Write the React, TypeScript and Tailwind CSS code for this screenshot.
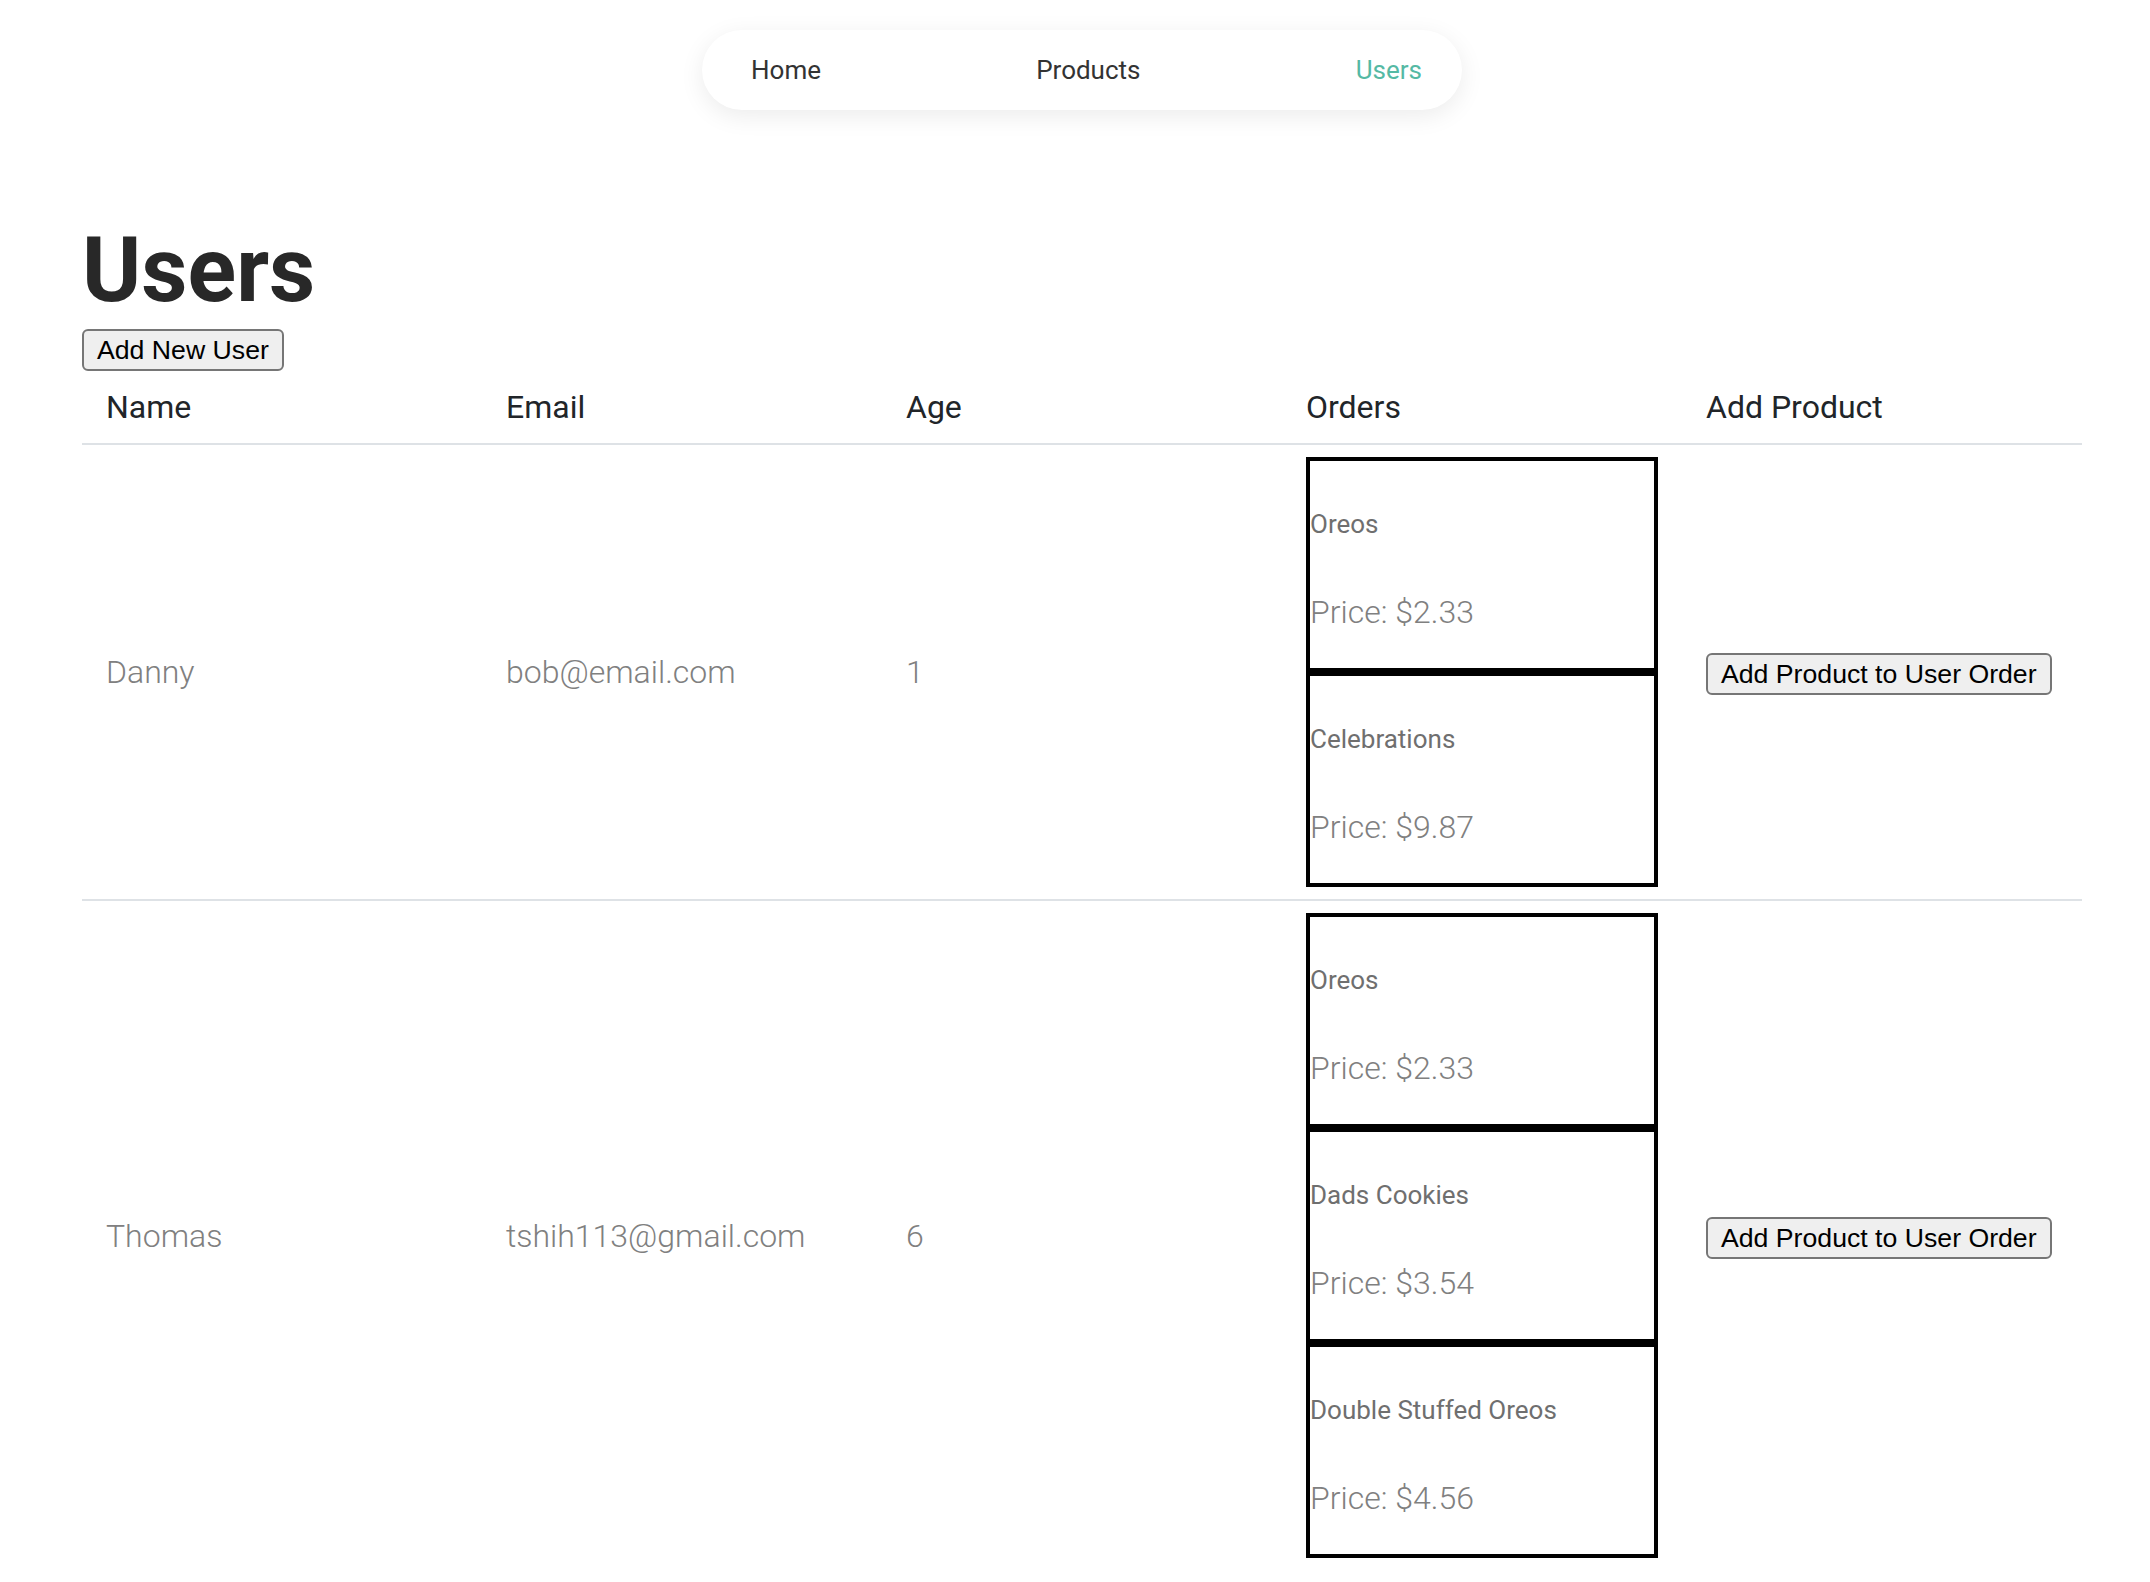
import React from 'react';

interface Product {
  name: string;
  price: number;
}

interface User {
  name: string;
  email: string;
  age: number;
  orders: Product[];
}

const users: User[] = [
  {
    name: 'Danny',
    email: 'bob@email.com',
    age: 1,
    orders: [
      { name: 'Oreos', price: 2.33 },
      { name: 'Celebrations', price: 9.87 },
    ],
  },
  {
    name: 'Thomas',
    email: 'tshih113@gmail.com',
    age: 6,
    orders: [
      { name: 'Oreos', price: 2.33 },
      { name: 'Dads Cookies', price: 3.54 },
      { name: 'Double Stuffed Oreos', price: 4.56 },
    ],
  },
];

const buttonClass =
  "h-[42px] px-[13px] bg-[#efefef] border-2 border-[#767676] rounded-[6px] text-black text-[26.67px] leading-none font-normal font-['Liberation_Sans',Arial,sans-serif] whitespace-nowrap";

const Nav: React.FC = () => (
  <div className="flex justify-center pt-[30px] pl-[14px]">
    <nav className="flex items-center justify-between w-[760px] h-[80px] rounded-full bg-white shadow-[0_6px_24px_rgba(0,0,0,0.08)] pl-[49px] pr-[40px] text-[26px]">
      <a className="text-[#333333]">Home</a>
      <a className="text-[#333333]">Products</a>
      <a className="text-[#55b9a4]">Users</a>
    </nav>
  </div>
);

const OrderCard: React.FC<{ product: Product }> = ({ product }) => (
  <div className="border-4 border-black pt-[44px] pb-[32px]">
    <p className="text-[26px] leading-[39px] font-normal text-[#6f6f6f]">{product.name}</p>
    <p className="mt-[44px] text-[32px] leading-[48px] font-light text-[#808080]">
      Price: ${product.price.toFixed(2)}
    </p>
  </div>
);

export default function App() {
  return (
    <div className="min-h-screen bg-white font-['Roboto',sans-serif]">
      <Nav />

      <main className="ml-[82px] w-[2000px]">
        <h1 className="mt-[107px] text-[90px] leading-[108px] font-bold text-[#282828]">Users</h1>
        <button className={`mt-[4px] ${buttonClass}`}>Add New User</button>

        {/* Header */}
        <div className="grid grid-cols-5 text-[32px] leading-[48px] text-[#212529]">
          <div className="px-[24px] py-[12px]">Name</div>
          <div className="px-[24px] py-[12px]">Email</div>
          <div className="px-[24px] py-[12px]">Age</div>
          <div className="px-[24px] py-[12px]">Orders</div>
          <div className="px-[24px] py-[12px]">Add Product</div>
        </div>

        {users.map((user) => (
          <div
            key={user.email}
            className="grid grid-cols-5 items-center border-t-2 border-[#dee2e6] text-[32px] leading-[48px] font-light text-[#808080]"
          >
            <div className="px-[24px] py-[12px]">{user.name}</div>
            <div className="px-[24px] py-[12px]">{user.email}</div>
            <div className="px-[24px] py-[12px]">{user.age}</div>
            <div className="px-[24px] py-[12px]">
              {user.orders.map((p, i) => (
                <OrderCard key={i} product={p} />
              ))}
            </div>
            <div className="px-[24px] py-[12px]">
              <button className={buttonClass}>Add Product to User Order</button>
            </div>
          </div>
        ))}
      </main>
    </div>
  );
}
